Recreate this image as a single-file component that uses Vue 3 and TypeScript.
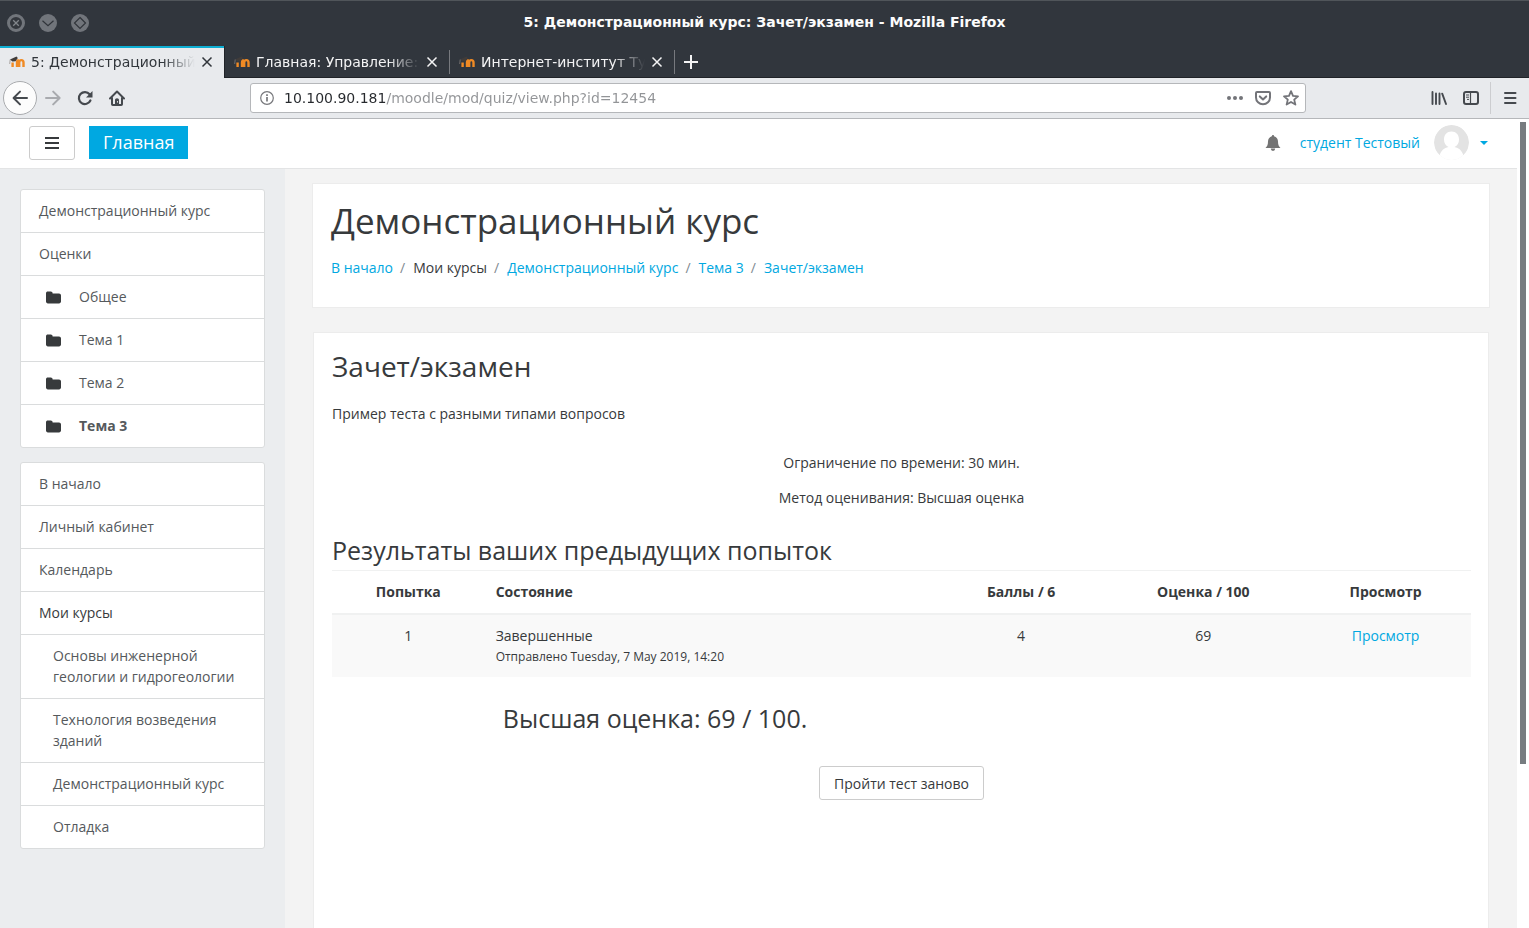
<script setup lang="ts">
import { ref } from 'vue'

interface Tab { title: string; active: boolean }
interface NavItem { text: string; kind?: 'folder' | 'sub' | 'plain'; current?: boolean }
interface Crumb { text: string; link: boolean }
interface Attempt { number: number; state: string; submitted: string; marks: string; grade: string }

const address = ref('10.100.90.181/moodle/mod/quiz/view.php?id=12454')

const tabs: Tab[] = [
  { title: '5: Демонстрационный', active: true },
  { title: 'Главная: Управление:', active: false },
  { title: 'Интернет-институт Ту', active: false },
]

const navGroups: NavItem[][] = [
  [
    { text: 'Демонстрационный курс' },
    { text: 'Оценки' },
    { text: 'Общее', kind: 'folder' },
    { text: 'Тема 1', kind: 'folder' },
    { text: 'Тема 2', kind: 'folder' },
    { text: 'Тема 3', kind: 'folder', current: true },
  ],
  [
    { text: 'В начало' },
    { text: 'Личный кабинет' },
    { text: 'Календарь' },
    { text: 'Мои курсы', kind: 'plain' },
    { text: 'Основы инженерной геологии и гидрогеологии', kind: 'sub' },
    { text: 'Технология возведения зданий', kind: 'sub' },
    { text: 'Демонстрационный курс', kind: 'sub' },
    { text: 'Отладка', kind: 'sub' },
  ],
]

const crumbs: Crumb[] = [
  { text: 'В начало', link: true },
  { text: 'Мои курсы', link: false },
  { text: 'Демонстрационный курс', link: true },
  { text: 'Тема 3', link: true },
  { text: 'Зачет/экзамен', link: true },
]

const attempts: Attempt[] = [
  { number: 1, state: 'Завершенные', submitted: 'Отправлено Tuesday, 7 May 2019, 14:20', marks: '4', grade: '69' },
]
</script>

<template>
  <div class="browser">
    <div class="titlebar">
      <div class="window-buttons">
        <button type="button" aria-label="Закрыть окно">
          <svg width="20" height="20" viewBox="0 0 20 20"><circle cx="10" cy="10" r="7.5" fill="#33373d" stroke="#71757b" stroke-width="3" /><path d="M7.2 7.2l5.6 5.6M12.8 7.2l-5.6 5.6" stroke="#82868b" stroke-width="1.3" /></svg>
        </button>
        <button type="button" aria-label="Свернуть">
          <svg width="20" height="20" viewBox="0 0 20 20"><circle cx="10" cy="10" r="9" fill="#71757b" /><path d="M4.5 7.8l5.5 5 5.5-5" fill="none" stroke="#30343a" stroke-width="1.2" /></svg>
        </button>
        <button type="button" aria-label="Развернуть">
          <svg width="20" height="20" viewBox="0 0 20 20"><circle cx="10" cy="10" r="9" fill="#71757b" /><path d="M10 4.5l5.5 5.5-5.5 5.5L4.5 10z" fill="none" stroke="#30343a" stroke-width="1.2" /></svg>
        </button>
      </div>
      <div class="window-title">5: Демонстрационный курс: Зачет/экзамен - Mozilla Firefox</div>
    </div>

    <div class="tabstrip">
      <div v-for="tab in tabs" :key="tab.title" class="tab" :class="{ active: tab.active }">
        <svg class="favicon" width="16" height="16" viewBox="0 0 16 16">
          <path d="M3.6 13V8.500M8 13V8.600C8 6.900 8.700 6.200 9.700 6.200M10.200 13V8.400c0-1.500.9-2.300 2.100-2.300s2.200.8 2.200 2.300V13" fill="none" stroke="#f08a24" stroke-width="2.400" />
          <path d="M1 5.500L7.500 2.500 8.800 4 6.600 7.200 3.400 7.500z" fill="#403c3a" />
          <path d="M1.200 5.500L.7 10" stroke="#8f8782" stroke-width=".7" />
        </svg>
        <span class="tab-title">{{ tab.title }}</span>
        <button type="button" class="tab-close" aria-label="Закрыть вкладку">
          <svg width="12" height="12" viewBox="0 0 12 12"><path d="M1.5 1.500l9 9M10.500 1.500l-9 9" stroke="currentColor" stroke-width="1.500" /></svg>
        </button>
      </div>
      <button type="button" class="new-tab" aria-label="Новая вкладка">
        <svg width="14" height="14" viewBox="0 0 14 14"><path d="M7 0v14M0 7h14" stroke="currentColor" stroke-width="2" /></svg>
      </button>
    </div>

    <div class="toolbar">
      <button type="button" class="back" aria-label="Назад">
        <svg width="16" height="16" viewBox="0 0 16 16"><path d="M15 8H2M8 1.6L1.6 8 8 14.4" fill="none" stroke="currentColor" stroke-width="2" stroke-linecap="round" stroke-linejoin="round" /></svg>
      </button>
      <button type="button" class="tool disabled" aria-label="Вперёд">
        <svg width="16" height="16" viewBox="0 0 16 16"><path d="M1 8h13M8.2 1.6L14.6 8l-6.4 6.4" fill="none" stroke="currentColor" stroke-width="2" stroke-linecap="round" stroke-linejoin="round" /></svg>
      </button>
      <button type="button" class="tool" aria-label="Обновить">
        <svg width="16" height="16" viewBox="0 0 16 16"><path d="M13.4 10.5A6 6 0 1 1 12.6 4.3" fill="none" stroke="currentColor" stroke-width="2.2" stroke-linecap="round" /><path d="M15.5 1v6.5H9z" fill="currentColor" /></svg>
      </button>
      <button type="button" class="tool" aria-label="Домой">
        <svg width="16" height="16" viewBox="0 0 16 16"><path d="M1 8.5L8 1.5l7 7M3 8v6.2c0 .5.3.8.8.8h8.4c.5 0 .8-.3.8-.8V8" fill="none" stroke="currentColor" stroke-width="2" stroke-linecap="round" stroke-linejoin="round" /><path d="M6 15V10.2C6 9 6.8 8.3 8 8.3s2 .7 2 1.9V15z" fill="currentColor" /><path d="M8.5 11.2v1.3" stroke="#fff" stroke-width="1" /></svg>
      </button>
      <div class="urlbar">
        <svg width="14" height="14" viewBox="0 0 14 14"><circle cx="7" cy="7" r="6.3" fill="none" stroke="#77787c" stroke-width="1.2" /><path d="M7 6v4.5M7 3.2v1.7" stroke="#77787c" stroke-width="1.7" /></svg>
        <input v-model="address" type="text" aria-label="Адрес" />
        <svg width="16" height="16" viewBox="0 0 16 16" fill="#737479"><circle cx="2" cy="8" r="2" /><circle cx="8" cy="8" r="2" /><circle cx="14" cy="8" r="2" /></svg>
        <svg width="16" height="16" viewBox="0 0 16 16" fill="none" stroke="#737479" stroke-width="2" stroke-linejoin="round" stroke-linecap="round"><path d="M2 2h12c.6 0 1 .4 1 1v4.5a7 6.8 0 0 1-14 0V3c0-.6.4-1 1-1z" /><path d="M4.8 6.4L8 9.4l3.2-3" /></svg>
        <svg width="16" height="16" viewBox="0 0 16 16" fill="none" stroke="#737479" stroke-width="1.8" stroke-linejoin="round"><path d="M8 1.2l2 4.6 5 .5-3.8 3.3 1.2 5L8 12l-4.4 2.6 1.2-5L1 6.3l5-.5z" /></svg>
      </div>
      <button type="button" class="tool" aria-label="Библиотека">
        <svg width="16" height="16" viewBox="0 0 16 16" stroke="currentColor" fill="none" stroke-linecap="round"><path d="M1.5 2v12M5 3.5V14M8.5 3.5V14M11.2 3.7L15 14" stroke-width="1.9" /></svg>
      </button>
      <button type="button" class="tool" aria-label="Боковая панель">
        <svg width="16" height="16" viewBox="0 0 16 16" fill="none" stroke="currentColor"><rect x="1" y="2" width="14" height="12" rx="2" stroke-width="2" /><path d="M7.5 2v12" stroke-width="1.2" /><path d="M3 5h3M3 7.2h3M4 9.4h2" stroke-width="1" /></svg>
      </button>
      <div class="tool-sep"></div>
      <button type="button" class="tool" aria-label="Меню">
        <svg width="14" height="14" viewBox="0 0 14 14" stroke="currentColor" stroke-width="2" stroke-linecap="round"><path d="M2 2h10.5M2 7h10.5M2 12h10.5" /></svg>
      </button>
    </div>

    <div class="viewport">
      <div class="page">
        <header class="site-header">
          <button type="button" class="drawer-toggle" aria-label="Панель навигации">
            <svg width="14" height="14" viewBox="0 0 14 14"><path d="M0 2h14M0 7h14M0 12h14" stroke="#373a3c" stroke-width="2" /></svg>
          </button>
          <a href="#" class="brand">Главная</a>
          <button type="button" class="bell" aria-label="Уведомления">
            <svg width="16" height="16" viewBox="0 0 16 16" fill="#737373"><path d="M8 0c.7 0 1.1.5 1 1.3C11.6 1.9 13 4 13 6.500c0 3.400.9 4.900 2.500 6.500H.500C2.100 11.400 3 9.900 3 6.500 3 4 4.400 1.900 7 1.300 6.900.5 7.300 0 8 0z" /><path d="M5.800 13.500h4.400a2.200 2.400 0 0 1-4.400 0z" /></svg>
          </button>
          <a href="#" class="user">
            <span>студент Тестовый</span>
            <svg class="avatar" width="35" height="35" viewBox="0 0 35 35"><circle cx="17.500" cy="17.500" r="17.500" fill="#e3e3e3" /><path d="M5.500 30.500C7.500 25 10 23 14.500 22c-3-1.500-4.500-4-4.500-7.500C10 9.500 13 6.500 17.500 6.500S25 9.500 25 14.500c0 3.500-1.500 6-4.500 7.500 4.500 1 7 3 9 8.500V35h-24z" fill="#fff" /></svg>
            <svg width="8" height="4" viewBox="0 0 8 4"><path d="M0 0h8L4 4z" fill="currentColor" /></svg>
          </a>
        </header>

        <div class="body">
          <nav class="drawer">
            <ul v-for="(group, g) in navGroups" :key="g" class="nav-group">
              <li v-for="item in group" :key="item.text" :class="[item.kind, { current: item.current }]">
                <svg v-if="item.kind === 'folder'" width="16" height="16" viewBox="0 0 16 16"><path d="M0 4.200C0 3 .8 2.400 1.800 2.400h3c1 0 1.800.7 1.800 1.800v.300H13c1.100 0 2 .8 2 1.900v6.200c0 1-.9 1.900-2 1.900H1.900C.8 14.500 0 13.600 0 12.600z" fill="#373a3c" /></svg>
                <span v-if="item.kind === 'plain'">{{ item.text }}</span>
                <a v-else href="#">{{ item.text }}</a>
              </li>
            </ul>
          </nav>

          <main class="content">
            <section class="card heading-card">
              <h1>Демонстрационный курс</h1>
              <ol class="crumbs">
                <li v-for="c in crumbs" :key="c.text">
                  <a v-if="c.link" href="#">{{ c.text }}</a>
                  <span v-else>{{ c.text }}</span>
                </li>
              </ol>
            </section>

            <section class="card quiz-card">
              <h2>Зачет/экзамен</h2>
              <p class="intro">Пример теста с разными типами вопросов</p>
              <div class="info">
                <p>Ограничение по времени: 30 мин.</p>
                <p>Метод оценивания: Высшая оценка</p>
              </div>
              <h3>Результаты ваших предыдущих попыток</h3>
              <table>
                <thead>
                  <tr>
                    <th class="c-attempt">Попытка</th>
                    <th class="c-state">Состояние</th>
                    <th class="c-marks">Баллы / 6</th>
                    <th class="c-grade">Оценка / 100</th>
                    <th class="c-review">Просмотр</th>
                  </tr>
                </thead>
                <tbody>
                  <tr v-for="a in attempts" :key="a.number">
                    <td>{{ a.number }}</td>
                    <td class="c-state">{{ a.state }}<span class="submitted">{{ a.submitted }}</span></td>
                    <td>{{ a.marks }}</td>
                    <td>{{ a.grade }}</td>
                    <td><a href="#">Просмотр</a></td>
                  </tr>
                </tbody>
              </table>
              <h3 class="best">Высшая оценка: 69 / 100.</h3>
              <div class="actions"><button type="button">Пройти тест заново</button></div>
            </section>
          </main>
        </div>
      </div>
      <div class="scrollbar"><div class="thumb"></div></div>
    </div>
  </div>
</template>

<style>
body {
  margin: 0;
  overflow: hidden;
}
</style>

<style scoped>
* {
  box-sizing: border-box;
}
.browser {
  display: flex;
  flex-direction: column;
  height: 100vh;
  font: 14px/21px "Open Sans", "Noto Sans", sans-serif;
  color: #373a3c;
  background: #fff;
}
button {
  font: inherit;
  color: inherit;
  background: none;
  border: 0;
  padding: 0;
}
svg {
  display: block;
  flex: none;
}
a {
  color: #00a8e1;
  text-decoration: none;
}
.titlebar,
.tabstrip,
.toolbar {
  flex: none;
  font-family: "DejaVu Sans", sans-serif;
}
.titlebar {
  display: grid;
  grid-template-columns: 1fr auto 1fr;
  align-items: center;
  height: 46px;
  padding-bottom: 2px;
  background: #31363d;
  border-top: 1px solid #50555a;
}
.window-buttons {
  display: flex;
  gap: 12px;
  padding-left: 6px;
}
.window-title {
  color: #fcfcfc;
  font-size: 14px;
  font-weight: bold;
}
.tabstrip {
  display: flex;
  height: 32px;
  background: #31363d;
  color: #f4f4f5;
}
.tab {
  display: flex;
  align-items: center;
  width: 225px;
  padding: 0 12px 0 9px;
  background: linear-gradient(#77797e, #77797e) right center / 1px 24px no-repeat;
  box-shadow: inset 0 -1px #202328;
}
.tab.active {
  background: #e8eaed;
  color: #31363b;
  box-shadow: inset -1px 0 #202328, inset 0 2px #0daed3;
}
.favicon {
  margin-right: 6px;
}
.tab-title {
  flex: 1;
  min-width: 0;
  overflow: hidden;
  white-space: nowrap;
  font-size: 14px;
  mask-image: linear-gradient(to left, transparent, #000 32px);
}
.tab-close {
  margin-left: 6px;
}
.new-tab {
  flex: 1;
  padding: 0 9px;
  box-shadow: inset 0 -1px #202328;
}
.toolbar {
  display: flex;
  align-items: center;
  height: 41px;
  padding: 0 3px;
  background: #e8eaed;
  border-bottom: 1px solid #b5b7ba;
  color: #45494e;
}
.back {
  display: grid;
  place-items: center;
  width: 34px;
  height: 34px;
  background: #fcfcfc;
  border: 1px solid #a9abae;
  border-radius: 50%;
}
.tool {
  display: grid;
  place-items: center;
  width: 32px;
  height: 32px;
}
.tool.disabled {
  color: #a8aaae;
}
.urlbar {
  display: flex;
  align-items: center;
  gap: 12px;
  flex: 1;
  height: 30px;
  margin: 0 117px;
  padding: 0 6px 0 9px;
  background: #fff;
  border: 1px solid #b5b7ba;
  border-radius: 3px;
}
.urlbar input {
  flex: 1;
  min-width: 0;
  margin-left: -2px;
  padding: 0;
  border: 0;
  outline: 0;
  font: 14px/20px "DejaVu Sans", sans-serif;
  color: transparent;
  background: linear-gradient(to right, #26292d 102px, #929497 102px);
  background-clip: text;
}
.tool-sep {
  width: 1px;
  height: 32px;
  margin: 0 3px;
  background: #cccdd0;
}
.viewport {
  display: flex;
  flex: 1;
  min-height: 0;
}
.page {
  display: flex;
  flex-direction: column;
  flex: 1;
  min-width: 0;
  overflow: hidden;
}
.scrollbar {
  flex: none;
  width: 12px;
  padding: 3px;
}
.thumb {
  width: 6px;
  height: 80%;
  background: #777c80;
}
.site-header {
  display: flex;
  align-items: center;
  flex: none;
  height: 50px;
  padding: 0 29px 2px;
  border-bottom: 1px solid #e3e4e5;
}
.drawer-toggle {
  display: grid;
  place-items: center;
  width: 46px;
  height: 34px;
  border: 1px solid #ccc;
  border-radius: 3px;
}
.brand {
  margin-left: 14px;
  padding: 0 14px;
  background: #00a8e1;
  color: #fff;
  font-size: 18px;
  line-height: 33px;
}
.bell {
  margin-left: auto;
}
.user {
  display: flex;
  align-items: center;
  margin-left: 19px;
}
.avatar {
  margin: 0 11px 0 14px;
  border-radius: 50%;
}
.body {
  display: flex;
  flex: 1;
  min-height: 0;
}
.drawer {
  flex: none;
  width: 285px;
  padding: 20px;
  background: #ebedef;
}
.nav-group {
  margin: 0 0 14px;
  padding: 0;
  list-style: none;
  background: #fff;
  border: 1px solid #dadcdd;
  border-radius: 3px;
}
.nav-group li {
  display: flex;
  align-items: center;
  padding: 10px 18px 11px;
}
.nav-group li + li {
  border-top: 1px solid #dadcdd;
}
.nav-group a {
  color: #55595c;
}
.nav-group .folder svg {
  margin: 0 17px 0 7px;
}
.nav-group .sub {
  padding-left: 32px;
}
.nav-group .current {
  font-weight: bold;
}
.content {
  display: flex;
  flex-direction: column;
  flex: 1;
  min-width: 0;
  padding: 14px 27px 0;
  background: #f3f3f3;
}
.card {
  background: #fff;
  border: 1px solid #ececec;
}
h1,
h2,
h3,
p {
  margin: 0;
  font-weight: normal;
}
.heading-card {
  padding: 17px 18px 29px;
}
h1 {
  font-size: 35px;
  line-height: 39px;
}
.crumbs {
  display: flex;
  margin: 0;
  padding: 17px 0 0;
  list-style: none;
}
.crumbs li + li::before {
  content: "/";
  padding: 0 8px 0 7px;
  color: #818a91;
}
.quiz-card {
  flex: 1;
  margin: 24px 1px 0;
  padding: 18px 17px 18px 18px;
  border-bottom: 0;
}
h2 {
  font-size: 28px;
  line-height: 31px;
}
.intro {
  margin-top: 21px;
}
.info {
  display: grid;
  gap: 14px;
  margin: 28px 0;
  text-align: center;
}
h3 {
  font-size: 25px;
  line-height: 28px;
}
table {
  width: 100%;
  margin-top: 6px;
  border-collapse: collapse;
  table-layout: fixed;
  border-top: 1px solid #f0f1f1;
}
th,
td {
  padding: 10px 11px;
  text-align: center;
  vertical-align: top;
}
th {
  padding-bottom: 11px;
  border-bottom: 2px solid #f0f1f1;
}
tbody tr {
  background: #f9f9f9;
}
.c-attempt {
  width: 13.4%;
}
.c-state {
  text-align: left;
}
.c-marks,
.c-review {
  width: 15%;
}
.c-grade {
  width: 17%;
}
.submitted {
  display: block;
  font-size: 12px;
}
.best {
  margin: 27px 0 0 15%;
}
.actions {
  margin-top: 34px;
  text-align: center;
}
.actions button {
  height: 34px;
  padding: 0 14px;
  background: #fff;
  border: 1px solid #ccc;
  border-radius: 3px;
}
</style>
